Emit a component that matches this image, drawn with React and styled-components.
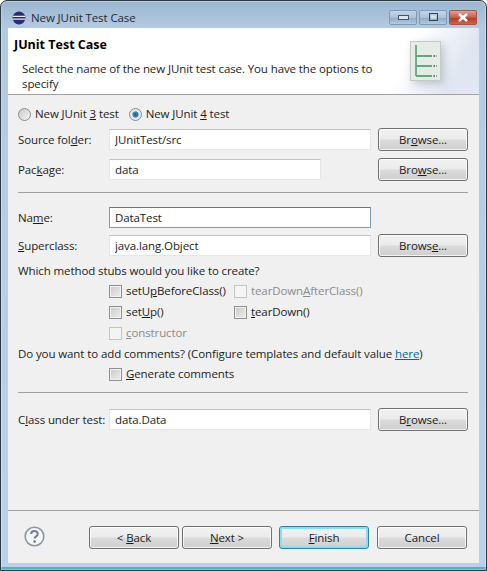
import React from "react";
import styled, { createGlobalStyle } from "styled-components";

const GlobalStyle = createGlobalStyle`
  html, body {
    margin: 0;
    padding: 0;
    background: #fff;
  }
  body {
    font-family: "Open Sans", "Noto Sans", sans-serif;
    font-size: 11.5px;
    letter-spacing: -0.1px;
    color: #1c1c1c;
  }
  * { box-sizing: border-box; }
  u { text-underline-offset: 1px; }
`;

const Win = styled.div`
  width: 487px;
  height: 571px;
  display: flex;
  flex-direction: column;
  border: 1px solid #2a3a44;
  border-radius: 7px 7px 0 0;
  background: linear-gradient(180deg, #9db7d1 0, #b3cbe2 28px, #b9d1ea 100%);
  box-shadow: inset 0 0 0 1px rgba(255, 255, 255, 0.3), inset 0 -3px 0 #4fb3c4;
  overflow: hidden;
`;

const TitleBar = styled.div`
  height: 27px;
  flex: none;
  display: flex;
  align-items: center;
  padding: 6px 9px 0 11px;
`;

const TitleText = styled.span`
  margin-left: 5px;
  font-size: 11.5px;
  color: #222b33;
`;

const WinButtons = styled.div`
  margin-left: auto;
  display: flex;
  gap: 2px;
`;

const WinButton = styled.div`
  width: 28px;
  height: 15px;
  display: flex;
  align-items: center;
  justify-content: center;
  border: 1px solid ${(p) => (p.$close ? "#9a5a50" : "#7f9ab3")};
  border-radius: 2px;
  background: ${(p) =>
    p.$close
      ? "linear-gradient(180deg, #e0a090 0, #cf5a46 50%, #b53a2a 55%, #d0604c 100%)"
      : "linear-gradient(180deg, #c4d6e6 0, #aac2d8 50%, #8fabc6 55%, #b4cbe0 100%)"};
`;

const Body = styled.div`
  flex: 1;
  margin: 0 7px 7px;
  display: flex;
  flex-direction: column;
  background: #f0f0f0;
  min-height: 0;
`;

const Header = styled.div`
  height: 67px;
  flex: none;
  display: flex;
  justify-content: space-between;
  border-bottom: 1px solid #a0a0a0;
  background: linear-gradient(118deg, #fff 82%, #dfe5f1 94%, #e3e8f3 100%);
`;

const HeaderText = styled.div`
  padding: 8px 0 0 6px;
  width: 390px;
`;

const HeaderTitle = styled.div`
  font-weight: 700;
  font-size: 12.5px;
  letter-spacing: 0;
  line-height: 18px;
  color: #000;
`;

const HeaderDesc = styled.div`
  margin: 7px 0 0 8px;
  line-height: 15px;
`;

const WizardIcon = styled.svg`
  width: 31px;
  height: 40px;
  margin: 13px 38px 0 0;
  filter: drop-shadow(3px 3px 4px rgba(130, 140, 160, 0.45));
`;

const Form = styled.div`
  flex: 1;
  display: flex;
  flex-direction: column;
  padding: 11px 11px 0 10px;
`;

const Row = styled.div`
  display: flex;
  align-items: center;
  flex: none;
  height: ${(p) => (p.$field ? "23px" : "16px")};
  margin-top: ${(p) => p.$top || 0}px;
  padding-left: ${(p) => (p.$indent ? "91px" : "0")};
`;

const Caption = styled.span`
  margin-top: -2px;
  white-space: nowrap;
`;

const Label = styled.label`
  width: 91px;
  flex: none;
  white-space: nowrap;
`;

const TextInput = styled.input`
  width: ${(p) => p.$w || 262}px;
  height: 21px;
  flex: none;
  padding: 0 5px;
  font: inherit;
  letter-spacing: inherit;
  color: #1c1c1c;
  outline: none;
  background: #fff;
  border: 1px solid ${(p) => (p.$focus ? "#7d9ab8" : "#e6e6e6")};
  border-top-color: ${(p) => (p.$focus ? "#5a7a9c" : "#c4c4c4")};
`;

const Btn = styled.button`
  width: 90px;
  height: 23px;
  flex: none;
  padding: 0;
  font: inherit;
  letter-spacing: inherit;
  color: #1c1c1c;
  margin-left: ${(p) => p.$left || 0}px;
  border: 1px solid ${(p) => (p.$primary ? "#33809f" : "#707070")};
  border-radius: 3px;
  background: linear-gradient(180deg, #f2f2f2 0, #ebebeb 48%, #dbdbdb 52%, #cfcfcf 100%);
  box-shadow: ${(p) =>
    p.$primary
      ? "inset 0 0 0 2px #8fdcf0"
      : "inset 0 0 0 1px rgba(255,255,255,.75)"};
`;

const BrowseBtn = styled(Btn)`
  margin-left: auto;
`;

const Radio = styled.span`
  width: 13px;
  height: 13px;
  flex: none;
  margin-left: ${(p) => p.$left || 0}px;
  margin-right: 4px;
  border-radius: 50%;
  border: 1px solid #8a8a8a;
  background: ${(p) =>
    p.$on
      ? "radial-gradient(circle at 50% 50%, #1f5f8c 0, #3a8cc0 36%, #dfe6ec 44%, #f4f4f4 100%)"
      : "linear-gradient(135deg, #c8c8c8, #f6f6f6)"};
`;

const CheckCell = styled.div`
  width: ${(p) => p.$w || 125}px;
  flex: none;
  display: flex;
  align-items: center;
  gap: 4px;
  white-space: nowrap;
  color: ${(p) => (p.$off ? "#8a8a8a" : "inherit")};
`;

const CheckBox = styled.span`
  width: 13px;
  height: 13px;
  flex: none;
  border: 1px solid ${(p) => (p.$off ? "#c4c4c4" : "#8e8f8f")};
  background: ${(p) =>
    p.$off
      ? "#f4f4f4"
      : "linear-gradient(135deg, #c8c8c8 0, #dcdcdc 50%, #ececec 100%)"};
  box-shadow: inset 0 0 0 1px ${(p) => (p.$off ? "#f4f4f4" : "#f2f2f2")};
`;

const Sep = styled.div`
  height: 1px;
  flex: none;
  margin-top: ${(p) => p.$top}px;
  background: #a0a0a0;
`;

const Link = styled.a`
  color: #0066aa;
  text-decoration: underline;
`;

const Footer = styled.div`
  height: 53px;
  flex: none;
  display: flex;
  align-items: flex-start;
  padding: 15px 0 0 16px;
  border-top: 1px solid #a0a0a0;
`;

const HelpIcon = styled.svg`
  width: 21px;
  height: 21px;
  flex: none;
  margin-right: 44px;
`;

const Check = ({ label, off, w }) => (
  <CheckCell $off={off} $w={w}>
    <CheckBox $off={off} />
    <Caption>{label}</Caption>
  </CheckCell>
);

const App = () => (
  <>
    <GlobalStyle />
    <Win>
      <TitleBar>
        <svg width="14" height="14" viewBox="0 0 14 14">
          <circle cx="7" cy="7" r="6.5" fill="#2c2c6e" />
          <path d="M0.6 5.4h12.8M0.5 8.2h13" stroke="#e6e6f4" strokeWidth="1.2" />
        </svg>
        <TitleText>New JUnit Test Case</TitleText>
        <WinButtons>
          <WinButton>
            <svg width="11" height="6" viewBox="0 0 11 6">
              <rect x="0.5" y="0.5" width="10" height="4" fill="#d9e3ec" stroke="#44546a" />
            </svg>
          </WinButton>
          <WinButton>
            <svg width="11" height="9" viewBox="0 0 11 9">
              <rect x="1.5" y="0.5" width="8" height="7" fill="none" stroke="#33445a" />
              <rect x="3" y="2.5" width="5" height="3" fill="#d9e3ec" />
            </svg>
          </WinButton>
          <WinButton $close>
            <svg width="12" height="9" viewBox="0 0 12 9">
              <path d="M2 1l8 7M10 1l-8 7" stroke="#fff" strokeWidth="2.4" />
            </svg>
          </WinButton>
        </WinButtons>
      </TitleBar>
      <Body>
        <Header>
          <HeaderText>
            <HeaderTitle>JUnit Test Case</HeaderTitle>
            <HeaderDesc>
              Select the name of the new JUnit test case. You have the options to
              <br />
              specify
            </HeaderDesc>
          </HeaderText>
          <WizardIcon viewBox="0 0 31 40">
            <rect x="0.5" y="0.5" width="30" height="39" fill="#e6ebe6" stroke="#c2ccc4" />
            <path d="M6 4v31M6 15h16M6 25h16M6 35h16" stroke="#62a880" strokeWidth="1.8" fill="none" />
            <path d="M23.5 15h3M23.5 25h3M23.5 35h3" stroke="#4f8068" strokeWidth="2" strokeDasharray="1.5 1" />
          </WizardIcon>
        </Header>
        <Form>
          <Row>
            <Radio />
            <Caption>
              New JUnit <u>3</u> test
            </Caption>
            <Radio $on $left={10} />
            <Caption>
              New JUnit <u>4</u> test
            </Caption>
          </Row>
          <Row $field $top={6}>
            <Label>
              Source fol<u>d</u>er:
            </Label>
            <TextInput readOnly value="JUnitTest/src" />
            <BrowseBtn>
              Br<u>o</u>wse...
            </BrowseBtn>
          </Row>
          <Row $field $top={7}>
            <Label>
              Pac<u>k</u>age:
            </Label>
            <TextInput readOnly value="data" $w={212} />
            <BrowseBtn>
              Bro<u>w</u>se...
            </BrowseBtn>
          </Row>
          <Sep $top={11} />
          <Row $field $top={13}>
            <Label>
              Na<u>m</u>e:
            </Label>
            <TextInput readOnly value="DataTest" $focus />
          </Row>
          <Row $field $top={5}>
            <Label>
              <u>S</u>uperclass:
            </Label>
            <TextInput readOnly value="java.lang.Object" />
            <BrowseBtn>
              Brows<u>e</u>...
            </BrowseBtn>
          </Row>
          <Row $top={6}>
            <Caption>Which method stubs would you like to create?</Caption>
          </Row>
          <Row $top={4} $indent>
            <Check
              label={
                <>
                  setU<u>p</u>BeforeClass()
                </>
              }
            />
            <Check
              off
              label={
                <>
                  tearDown<u>A</u>fterClass()
                </>
              }
            />
          </Row>
          <Row $top={5} $indent>
            <Check
              label={
                <>
                  set<u>U</u>p()
                </>
              }
            />
            <Check
              label={
                <>
                  <u>t</u>earDown()
                </>
              }
            />
          </Row>
          <Row $top={5} $indent>
            <Check
              off
              label={
                <>
                  <u>c</u>onstructor
                </>
              }
            />
          </Row>
          <Row $top={5}>
            <Caption>
              Do you want to add comments? (Configure templates and default value <Link>here</Link>)
            </Caption>
          </Row>
          <Row $top={4} $indent>
            <Check
              w={200}
              label={
                <>
                  <u>G</u>enerate comments
                </>
              }
            />
          </Row>
          <Sep $top={10} />
          <Row $field $top={15}>
            <Label>
              C<u>l</u>ass under test:
            </Label>
            <TextInput readOnly value="data.Data" />
            <BrowseBtn>
              B<u>r</u>owse...
            </BrowseBtn>
          </Row>
        </Form>
        <Footer>
          <HelpIcon viewBox="0 0 21 21">
            <circle cx="10.5" cy="10.5" r="9.3" fill="#f4f6f8" stroke="#8b97a5" strokeWidth="1.6" />
            <path
              d="M7.2 8c0-4 6.6-4 6.6 0 0 2.4-3.2 2.4-3.2 4.6"
              fill="none"
              stroke="#6d7f95"
              strokeWidth="2"
            />
            <circle cx="10.6" cy="15.6" r="1.3" fill="#6d7f95" />
          </HelpIcon>
          <Btn>
            &lt; <u>B</u>ack
          </Btn>
          <Btn $left={3}>
            <u>N</u>ext &gt;
          </Btn>
          <Btn $left={7} $primary>
            <u>F</u>inish
          </Btn>
          <Btn $left={8}>Cancel</Btn>
        </Footer>
      </Body>
    </Win>
  </>
);

export default App;
